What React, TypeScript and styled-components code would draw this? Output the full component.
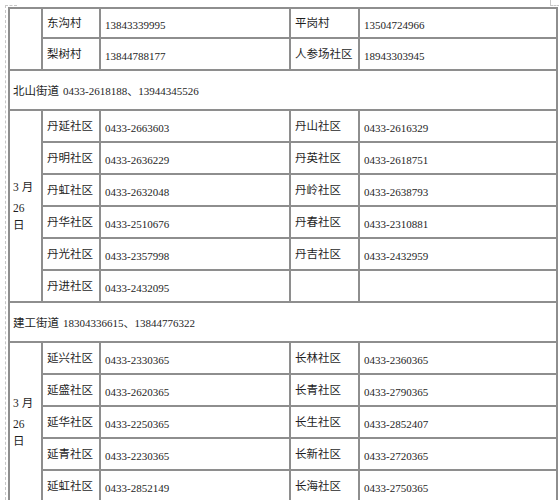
import React from 'react';
import styled, { createGlobalStyle } from 'styled-components';

const GlobalStyle = createGlobalStyle`
  html, body {
    margin: 0;
    padding: 0;
    background: #fff;
  }
  body {
    font-family: "Liberation Serif", "Noto Sans CJK SC", serif;
    color: #222;
    overflow: hidden;
  }
`;

type Entry = { name: string; phone: string };
type Row = [Entry, Entry | null];

type Group = {
  title?: string;
  contact?: string;
  date?: boolean;
  rows: Row[];
};

const groups: Group[] = [
  {
    rows: [
      [{ name: '东沟村', phone: '13843339995' }, { name: '平岗村', phone: '13504724966' }],
      [{ name: '梨树村', phone: '13844788177' }, { name: '人参场社区', phone: '18943303945' }],
    ],
  },
  {
    title: '北山街道',
    contact: '0433-2618188、13944345526',
    date: true,
    rows: [
      [{ name: '丹延社区', phone: '0433-2663603' }, { name: '丹山社区', phone: '0433-2616329' }],
      [{ name: '丹明社区', phone: '0433-2636229' }, { name: '丹英社区', phone: '0433-2618751' }],
      [{ name: '丹虹社区', phone: '0433-2632048' }, { name: '丹岭社区', phone: '0433-2638793' }],
      [{ name: '丹华社区', phone: '0433-2510676' }, { name: '丹春社区', phone: '0433-2310881' }],
      [{ name: '丹光社区', phone: '0433-2357998' }, { name: '丹吉社区', phone: '0433-2432959' }],
      [{ name: '丹进社区', phone: '0433-2432095' }, null],
    ],
  },
  {
    title: '建工街道',
    contact: '18304336615、13844776322',
    date: true,
    rows: [
      [{ name: '延兴社区', phone: '0433-2330365' }, { name: '长林社区', phone: '0433-2360365' }],
      [{ name: '延盛社区', phone: '0433-2620365' }, { name: '长青社区', phone: '0433-2790365' }],
      [{ name: '延华社区', phone: '0433-2250365' }, { name: '长生社区', phone: '0433-2852407' }],
      [{ name: '延青社区', phone: '0433-2230365' }, { name: '长新社区', phone: '0433-2720365' }],
      [{ name: '延虹社区', phone: '0433-2852149' }, { name: '长海社区', phone: '0433-2750365' }],
    ],
  },
];

const Page = styled.div`
  position: relative;
  height: 500px;
  padding: 7px 0 0 8px;
  box-sizing: border-box;

  &::before {
    content: '';
    position: absolute;
    left: 5px;
    top: 5px;
    bottom: 0;
    width: 11px;
    border-left: 1px dashed #c8c8c8;
    border-top: 1px dashed #c8c8c8;
  }

  &::after {
    content: '';
    position: absolute;
    left: 550px;
    top: 0;
    width: 9px;
    height: 5px;
    border-left: 1px dashed #c8c8c8;
    border-bottom: 1px dashed #c8c8c8;
  }
`;

const Table = styled.table`
  border-collapse: collapse;
  table-layout: fixed;
  width: 548px;
  border-top: 1px solid #c0c0c0;
  border-left: 1px solid #b4b4b4;
  border-right: 2px solid #999;
`;

const BodyRow = styled.tr<{ $compact?: boolean }>`
  & > td {
    height: ${(p) => (p.$compact ? '24px' : '26px')};
  }
`;

const Cell = styled.td<{ $kind?: 'name' | 'phone' }>`
  border: 2px solid #8e8e8e;
  padding: 0 0 0 4px;
  vertical-align: middle;
  white-space: nowrap;
  overflow: hidden;
  font-family: ${(p) =>
    p.$kind === 'phone' ? '"Liberation Serif", serif' : '"Noto Sans CJK SC", sans-serif'};
  font-size: ${(p) => (p.$kind === 'phone' ? '11px' : '11.5px')};
  line-height: 14px;
  padding-top: ${(p) => (p.$kind === 'phone' ? '4px' : '0')};
  padding-bottom: ${(p) => (p.$kind === 'name' ? '3px' : '0')};
  color: #1e1e1e;
`;

const TitleCell = styled.td`
  border: 2px solid #8e8e8e;
  height: 38px;
  padding: 0 0 0 3px;
  vertical-align: middle;
  white-space: nowrap;
  font-size: 11.5px;
  color: #1e1e1e;
`;

const TitleName = styled.span`
  font-family: "Noto Sans CJK SC", sans-serif;
  margin-right: 4px;
`;

const TitleContact = styled.span`
  font-family: "Liberation Serif", "Noto Sans CJK SC", serif;
  font-size: 11px;
`;

const DateCell = styled.td`
  border: 2px solid #8e8e8e;
  padding: 0 0 0 3px;
  vertical-align: middle;
  font-family: "Liberation Serif", "Noto Sans CJK SC", serif;
  font-size: 11.5px;
  line-height: 17px;
  color: #1e1e1e;
`;

const DateLine = styled.div<{ $gap?: boolean }>`
  margin-top: ${(p) => (p.$gap ? '4px' : '0')};
`;

function DateText() {
  return (
    <>
      <DateLine>3 月</DateLine>
      <DateLine $gap>26</DateLine>
      <DateLine>日</DateLine>
    </>
  );
}

export default function App() {
  return (
    <Page>
      <GlobalStyle />
      <Table>
        <colgroup>
          <col style={{ width: 33 }} />
          <col style={{ width: 58 }} />
          <col style={{ width: 190 }} />
          <col style={{ width: 69 }} />
          <col style={{ width: 198 }} />
        </colgroup>
        <tbody>
          {groups.map((g, gi) => (
            <React.Fragment key={gi}>
              {g.title && (
                <tr>
                  <TitleCell colSpan={5}>
                    <TitleName>{g.title}</TitleName>
                    <TitleContact>{g.contact}</TitleContact>
                  </TitleCell>
                </tr>
              )}
              {g.rows.map((r, ri) => (
                <BodyRow key={ri} $compact={gi === 0 && ri === 0}>
                  {ri === 0 && (
                    <DateCell rowSpan={g.rows.length}>{g.date ? <DateText /> : null}</DateCell>
                  )}
                  <Cell $kind="name">{r[0].name}</Cell>
                  <Cell $kind="phone">{r[0].phone}</Cell>
                  <Cell $kind="name">{r[1]?.name}</Cell>
                  <Cell $kind="phone">{r[1]?.phone}</Cell>
                </BodyRow>
              ))}
            </React.Fragment>
          ))}
        </tbody>
      </Table>
    </Page>
  );
}
